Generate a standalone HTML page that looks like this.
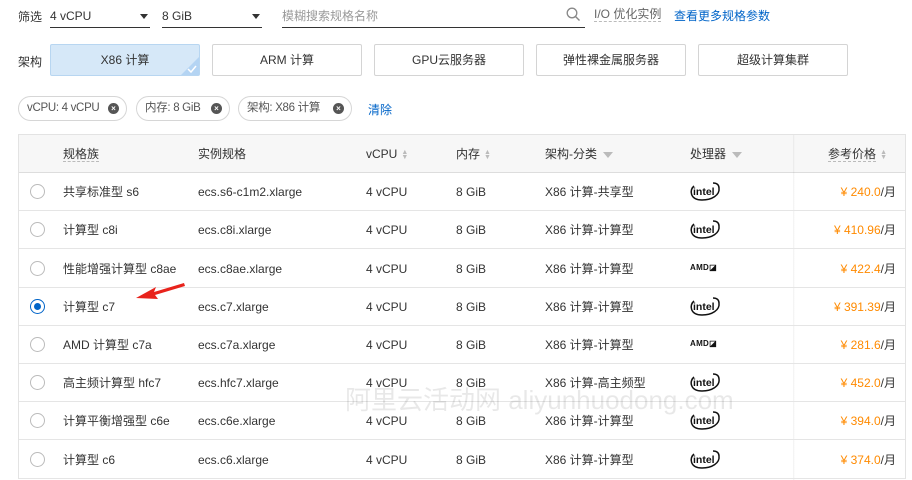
<!DOCTYPE html>
<html><head><meta charset="utf-8"><style>
*{box-sizing:border-box;margin:0;padding:0}
body{width:912px;height:479px;overflow:hidden;background:#fff;font-family:"Liberation Sans","Noto Sans CJK SC",sans-serif;font-size:12px;color:#333;position:relative}
.a{position:absolute;white-space:nowrap}
.sel{position:absolute;top:4px;height:24px;border-bottom:1px solid #333;font-size:12px;line-height:24px}
.tri{position:absolute;right:2px;top:10px;width:0;height:0;border-left:4px solid transparent;border-right:4px solid transparent;border-top:5px solid #333}
.btn{position:absolute;top:44px;width:150px;height:32px;border:1px solid #d4d4d4;border-radius:2px;text-align:center;line-height:30px;font-size:12px;color:#333}
.tag{position:absolute;top:96px;height:25px;border:1px solid #d6d6d6;border-radius:13px;line-height:23px;padding-left:8px;color:#555;font-size:11.5px;letter-spacing:-.3px}
.x{position:absolute;right:7px;top:6px;width:11px;height:11px;border-radius:50%;background:#555;color:#fff;font-size:8px;line-height:11px;text-align:center;font-weight:bold;font-style:normal;letter-spacing:0}
.tbl{position:absolute;left:18px;top:134px;width:888px;height:345px;border:1px solid #e3e3e3;border-bottom:none}
.hd{position:absolute;left:0;top:0;width:100%;height:38px;background:#f7f7f7;border-bottom:1px solid #ddd}
.row{position:absolute;left:0;width:100%;height:38px;border-bottom:1px solid #e5e5e5}
.c{position:absolute;top:0;line-height:38px;white-space:nowrap}
.radio{position:absolute;left:11px;top:11px;width:15px;height:15px;border:1px solid #bbb;border-radius:50%}
.radio.on{border-color:#0064c8}
.radio.on:after{content:"";position:absolute;left:3px;top:3px;width:7px;height:7px;border-radius:50%;background:#0064c8}
.price{position:absolute;right:9px;top:0;line-height:38px;color:#ff8a00}
.price span{color:#333}
.intel{position:absolute;left:670px;top:9px;width:32px;height:20px}
.amd{position:absolute;left:671px;top:13px;font-size:8px;font-weight:bold;font-family:"Liberation Sans",sans-serif;color:#111;letter-spacing:.3px}
.shadow{position:absolute;left:774px;top:0;width:2px;height:345px;background:linear-gradient(90deg,rgba(0,0,0,.06),transparent)}
.ft{display:inline-block;width:0;height:0;border-left:5px solid transparent;border-right:5px solid transparent;border-top:6px solid #bbb;vertical-align:middle;margin-left:6px}
.srt{display:inline-block;vertical-align:middle;margin-left:4px;font-size:7px;color:#bbb;line-height:5px}
</style></head><body>
<div class="a" style="left:18px;top:8px">筛选</div>
<div class="sel" style="left:50px;width:100px">4 vCPU<i class="tri"></i></div>
<div class="sel" style="left:162px;width:100px">8 GiB<i class="tri"></i></div>
<div class="sel" style="left:282px;width:303px;color:#999">模糊搜索规格名称</div>
<svg class="a" style="left:566px;top:7px" width="15" height="15" viewBox="0 0 15 15"><circle cx="6" cy="6" r="4.8" fill="none" stroke="#888" stroke-width="1.3"/><path d="M9.5 9.5L13.5 13.5" stroke="#888" stroke-width="1.4"/></svg>
<div class="a" style="left:594px;top:7px;color:#666;border-bottom:1px dashed #bbb;line-height:14px">I/O 优化实例</div>
<div class="a" style="left:674px;top:7px;color:#0064c8">查看更多规格参数</div>

<div class="a" style="left:18px;top:53px">架构</div>
<div class="btn" style="left:50px;background:#d6e8f8;border-color:#b8d6f1">X86 计算<svg style="position:absolute;right:0;bottom:0" width="18" height="18"><path d="M18 0V18H0Z" fill="#b4d4f3"/><path d="M7 12l3 3 5-6" stroke="#fff" stroke-width="1.5" fill="none"/></svg></div>
<div class="btn" style="left:212px">ARM 计算</div>
<div class="btn" style="left:374px">GPU云服务器</div>
<div class="btn" style="left:536px">弹性裸金属服务器</div>
<div class="btn" style="left:698px">超级计算集群</div>

<div class="tag" style="left:18px;width:109px">vCPU: 4 vCPU<i class="x">×</i></div>
<div class="tag" style="left:136px;width:94px">内存: 8 GiB<i class="x">×</i></div>
<div class="tag" style="left:238px;width:114px">架构: X86 计算<i class="x">×</i></div>
<div class="a" style="left:368px;top:101px;color:#0064c8">清除</div>

<div class="tbl">
<div class="hd">
<div class="c" style="left:44px"><span style="border-bottom:1px dashed #bbb">规格族</span></div>
<div class="c" style="left:179px">实例规格</div>
<div class="c" style="left:347px">vCPU<span class="srt">▲<br>▼</span></div>
<div class="c" style="left:437px">内存<span class="srt">▲<br>▼</span></div>
<div class="c" style="left:526px">架构-分类<i class="ft"></i></div>
<div class="c" style="left:671px">处理器<i class="ft"></i></div>
<div class="c" style="right:18px"><span style="border-bottom:1px dashed #bbb">参考价格</span><span class="srt">▲<br>▼</span></div>
</div>
<div class="shadow"></div>
</div>
<script>
var d=[["共享标准型 s6","ecs.s6-c1m2.xlarge","X86 计算-共享型",0,"240.0"],
["计算型 c8i","ecs.c8i.xlarge","X86 计算-计算型",0,"410.96"],
["性能增强计算型 c8ae","ecs.c8ae.xlarge","X86 计算-计算型",1,"422.4"],
["计算型 c7","ecs.c7.xlarge","X86 计算-计算型",0,"391.39"],
["AMD 计算型 c7a","ecs.c7a.xlarge","X86 计算-计算型",1,"281.6"],
["高主频计算型 hfc7","ecs.hfc7.xlarge","X86 计算-高主频型",0,"452.0"],
["计算平衡增强型 c6e","ecs.c6e.xlarge","X86 计算-计算型",0,"394.0"],
["计算型 c6","ecs.c6.xlarge","X86 计算-计算型",0,"374.0"]];
var tops=[38,76,115,153,191,229,267,306],h="";
var intel='<svg class="intel" viewBox="0 0 32 20"><text x="4" y="13" font-family="Liberation Sans" font-weight="bold" font-size="10.5" fill="#111">intel</text><path d="M5 4C0 8 1 18 13 18C23 18 31 13 30 6C30 3 28 1 24 1" fill="none" stroke="#111" stroke-width="1.5"/></svg>';
d.forEach(function(r,i){h+='<div class="row" style="top:'+tops[i]+'px"><i class="radio'+(i==3?' on':'')+'"></i><div class="c" style="left:44px">'+r[0]+'</div><div class="c" style="left:179px">'+r[1]+'</div><div class="c" style="left:347px">4 vCPU</div><div class="c" style="left:437px">8 GiB</div><div class="c" style="left:526px">'+r[2]+'</div>'+(r[3]?'<div class="amd">AMD◪</div>':intel)+'<div class="price">¥ '+r[4]+'<span>/月</span></div></div>';});
document.querySelector('.tbl').insertAdjacentHTML('beforeend',h);
</script>
<svg class="a" style="left:132px;top:280px" width="56" height="24"><path d="M52 3L22 12L24 7L4 18L26 19L23 15L53 6Z" fill="#e8231c"/></svg>
<div class="a" style="left:345px;top:380px;font-size:26px;color:rgba(0,0,0,.09)">阿里云活动网 aliyunhuodong.com</div>
</body></html>
